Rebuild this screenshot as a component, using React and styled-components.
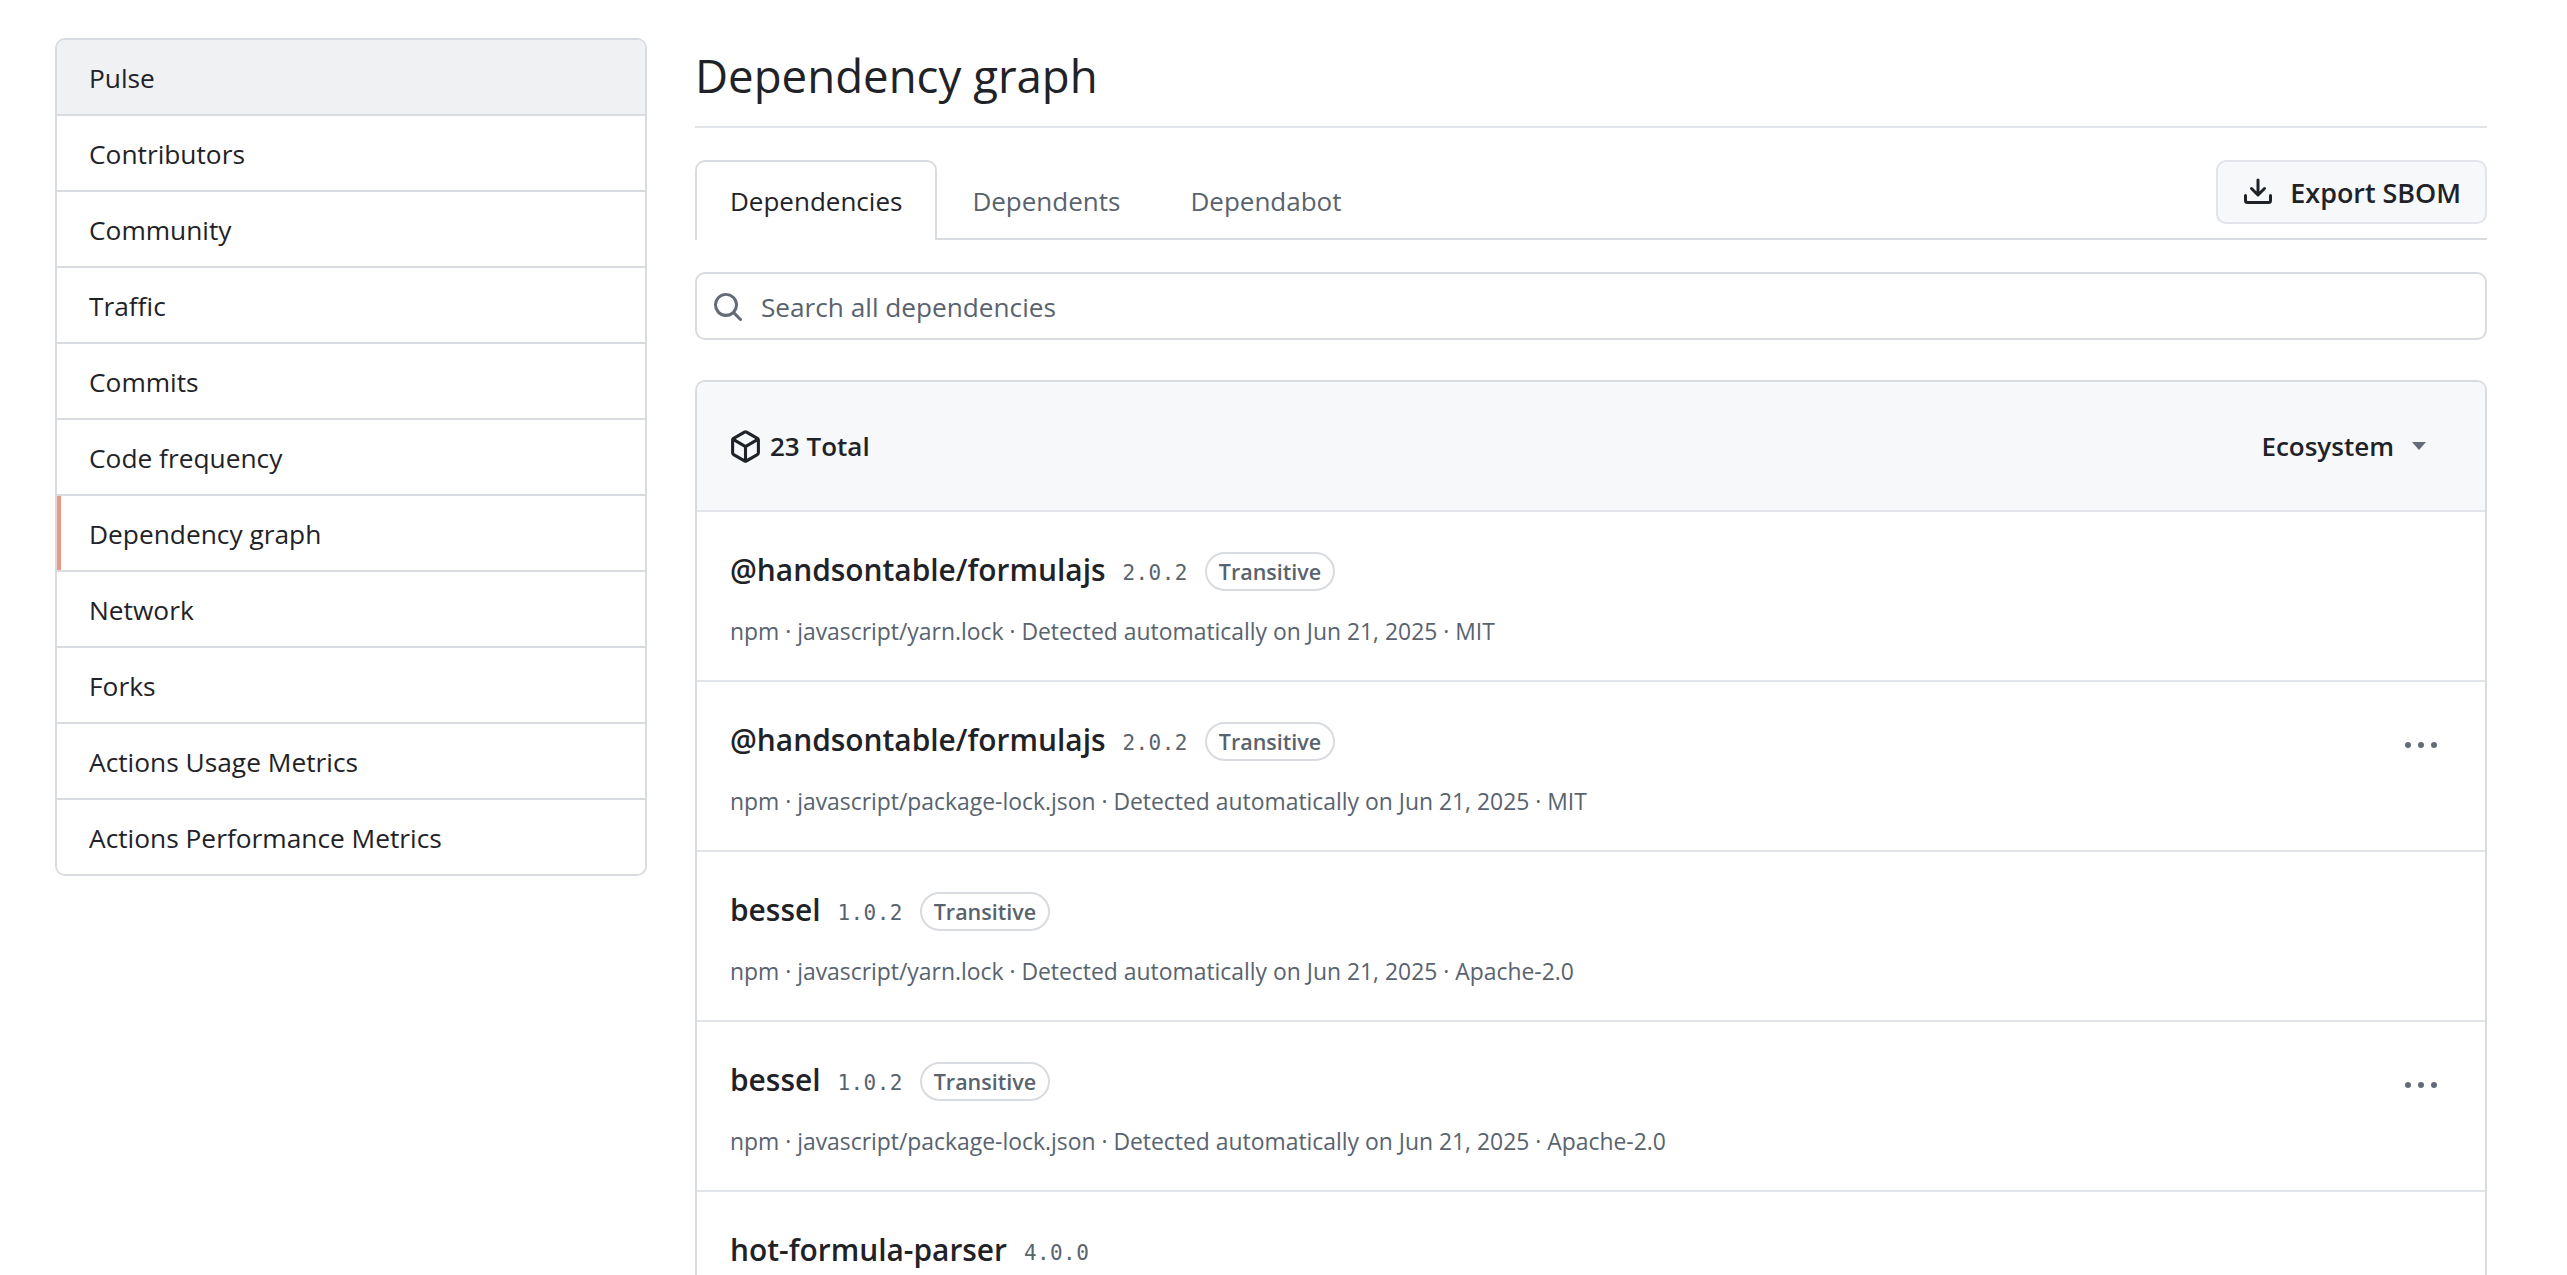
import React from 'react'
import styled, { createGlobalStyle } from 'styled-components'

const sideItems = [
  'Pulse',
  'Contributors',
  'Community',
  'Traffic',
  'Commits',
  'Code frequency',
  'Dependency graph',
  'Network',
  'Forks',
  'Actions Usage Metrics',
  'Actions Performance Metrics',
]

const deps = [
  { name: '@handsontable/formulajs', version: '2.0.2', transitive: true, meta: 'npm · javascript/yarn.lock · Detected automatically on Jun 21, 2025 · MIT' },
  { name: '@handsontable/formulajs', version: '2.0.2', transitive: true, menu: true, meta: 'npm · javascript/package-lock.json · Detected automatically on Jun 21, 2025 · MIT' },
  { name: 'bessel', version: '1.0.2', transitive: true, meta: 'npm · javascript/yarn.lock · Detected automatically on Jun 21, 2025 · Apache-2.0' },
  { name: 'bessel', version: '1.0.2', transitive: true, menu: true, meta: 'npm · javascript/package-lock.json · Detected automatically on Jun 21, 2025 · Apache-2.0' },
  { name: 'hot-formula-parser', version: '4.0.0' },
]

const Icon = ({ size, d }) => (
  <svg width={size} height={size} viewBox="0 0 16 16" fill="currentColor" style={{ flexShrink: 0 }}>
    {d.map(path => <path key={path} d={path} />)}
  </svg>
)

const downloadPaths = [
  'M2.75 14A1.75 1.75 0 0 1 1 12.25v-2.5a.75.75 0 0 1 1.5 0v2.5c0 .138.112.25.25.25h10.5a.25.25 0 0 0 .25-.25v-2.5a.75.75 0 0 1 1.5 0v2.5A1.75 1.75 0 0 1 13.25 14Z',
  'M7.25 7.689V2a.75.75 0 0 1 1.5 0v5.689l1.97-1.969a.749.749 0 1 1 1.06 1.06l-3.25 3.25a.749.749 0 0 1-1.06 0L4.22 6.78a.749.749 0 1 1 1.06-1.06l1.97 1.969Z',
]
const searchPaths = [
  'M10.68 11.74a6 6 0 0 1-7.922-8.982 6 6 0 0 1 8.982 7.922l3.04 3.04a.749.749 0 0 1-.326 1.275.749.749 0 0 1-.734-.215ZM11.5 7a4.499 4.499 0 1 0-8.997 0A4.499 4.499 0 0 0 11.5 7Z',
]
const packagePaths = [
  'm8.878.392 5.25 3.045c.54.314.872.89.872 1.514v6.098a1.75 1.75 0 0 1-.872 1.514l-5.25 3.045a1.75 1.75 0 0 1-1.756 0l-5.25-3.045A1.75 1.75 0 0 1 1 11.049V4.951c0-.624.332-1.201.872-1.514L7.122.392a1.75 1.75 0 0 1 1.756 0ZM7.875 1.69l-4.63 2.685L8 7.133l4.755-2.758-4.63-2.685a.248.248 0 0 0-.25 0ZM2.5 5.677v5.372c0 .09.047.171.125.216l4.625 2.683V8.432Zm6.25 8.271 4.625-2.683a.25.25 0 0 0 .125-.216V5.677L8.75 8.432Z',
]
const kebabPaths = [
  'M8 9a1.5 1.5 0 1 0 0-3 1.5 1.5 0 0 0 0 3ZM1.5 9a1.5 1.5 0 1 0 0-3 1.5 1.5 0 0 0 0 3Zm13 0a1.5 1.5 0 1 0 0-3 1.5 1.5 0 0 0 0 3Z',
]

const App = () => (
  <>
    <GlobalStyle />
    <Page>
      <SideNav>
        {sideItems.map(item => (
          <SideItem key={item} $selected={item === 'Pulse'} $current={item === 'Dependency graph'}>
            {item}
          </SideItem>
        ))}
      </SideNav>

      <Main>
        <Title>Dependency graph</Title>

        <TabBar>
          <Tab $active>Dependencies</Tab>
          <Tab>Dependents</Tab>
          <Tab>Dependabot</Tab>
          <ExportButton>
            <Icon size={32} d={downloadPaths} />
            Export SBOM
          </ExportButton>
        </TabBar>

        <SearchBox>
          <SearchIcon>
            <Icon size={32} d={searchPaths} />
          </SearchIcon>
          Search all dependencies
        </SearchBox>

        <Panel>
          <PanelHeader>
            <Total>
              <Icon size={33} d={packagePaths} />
              23 Total
            </Total>
            <Ecosystem>
              Ecosystem
              <Caret />
            </Ecosystem>
          </PanelHeader>

          {deps.map((dep, i) => (
            <Row key={i}>
              <div>
                <NameLine>
                  <Name>{dep.name}</Name>
                  <Version>{dep.version}</Version>
                  {dep.transitive && <Label>Transitive</Label>}
                </NameLine>
                {dep.meta && <Meta>{dep.meta}</Meta>}
              </div>
              {dep.menu && (
                <Kebab>
                  <Icon size={32} d={kebabPaths} />
                </Kebab>
              )}
            </Row>
          ))}
        </Panel>
      </Main>
    </Page>
  </>
)

export default App

const GlobalStyle = createGlobalStyle`
  html, body {
    margin: 0;
    height: 1275px;
    overflow: hidden;
    background: #ffffff;
  }

  body {
    font-family: "Open Sans", "Noto Sans", sans-serif;
    color: #1f2328;
  }

  * {
    box-sizing: border-box;
  }
`

const Page = styled.div`
  display: flex;
  align-items: flex-start;
  gap: 48px;
  padding: 38px 80px 0 55px;
`

const SideNav = styled.nav`
  flex: 0 0 592px;
  border: 2px solid #d8dbdf;
  border-radius: 10px;
  overflow: hidden;
`

const SideItem = styled.div`
  position: relative;
  display: flex;
  align-items: center;
  height: 76px;
  padding: 1px 0 0 32px;
  border-top: 2px solid #d8dbdf;
  font-size: 26.3px;
  background: ${props => (props.$selected ? '#eff1f3' : '#ffffff')};

  &:first-child {
    height: 74px;
    border-top: 0;
  }

  ${props => props.$current && `
    &::before {
      content: '';
      position: absolute;
      left: 0;
      top: 0;
      bottom: 0;
      width: 4px;
      background: #ea9a80;
    }
  `}
`

const Main = styled.main`
  flex: 1;
  min-width: 0;
`

const Title = styled.h1`
  height: 90px;
  margin: 0 0 32px;
  padding-top: 8px;
  border-bottom: 2px solid #e1e4e8;
  font-size: 45.6px;
  line-height: 58px;
  font-weight: 400;
`

const TabBar = styled.div`
  display: flex;
  align-items: flex-start;
  height: 80px;
  border-bottom: 2px solid #d8dbdf;
`

const Tab = styled.div`
  height: 80px;
  padding: 0 33px;
  border: 2px solid ${props => (props.$active ? '#d8dbdf' : 'transparent')};
  border-bottom: 0;
  border-radius: 10px 10px 0 0;
  background: ${props => (props.$active ? '#ffffff' : 'transparent')};
  color: ${props => (props.$active ? '#1f2328' : '#59636e')};
  font-size: 26px;
  line-height: 78px;
`

const ExportButton = styled.div`
  display: flex;
  align-items: center;
  gap: 16px;
  height: 64px;
  margin-left: auto;
  padding: 0 24px;
  border: 2px solid #e1e4e8;
  border-radius: 10px;
  background: #f6f8fa;
  font-size: 26.9px;
  font-weight: 600;
`

const SearchBox = styled.div`
  display: flex;
  align-items: center;
  gap: 17px;
  height: 68px;
  margin-top: 32px;
  padding: 2px 0 0 15px;
  border: 2px solid #d8dbdf;
  border-radius: 10px;
  color: #59636e;
  font-size: 26.2px;
`

const SearchIcon = styled.span`
  display: flex;
  color: #636c76;
`

const Panel = styled.section`
  margin-top: 40px;
  border: 2px solid #d8dbdf;
  border-bottom: 0;
  border-radius: 10px 10px 0 0;
`

const PanelHeader = styled.div`
  display: flex;
  align-items: center;
  justify-content: space-between;
  height: 128px;
  padding: 0 59px 0 32px;
  background: #f6f8fa;
  border-radius: 8px 8px 0 0;
`

const Total = styled.div`
  display: flex;
  align-items: center;
  gap: 8px;
  font-size: 26px;
  font-weight: 600;
`

const Ecosystem = styled.div`
  display: flex;
  align-items: center;
  gap: 18px;
  font-size: 26px;
  font-weight: 600;
`

const Caret = styled.span`
  width: 0;
  height: 0;
  border-left: 7px solid transparent;
  border-right: 7px solid transparent;
  border-top: 8px solid #636c76;
`

const Row = styled.div`
  display: flex;
  justify-content: space-between;
  height: 170px;
  padding: 40px 48px 0 33px;
  border-top: 2px solid #e1e4e8;
`

const NameLine = styled.div`
  display: flex;
  align-items: center;
  height: 39px;
`

const Name = styled.span`
  padding-bottom: 4px;
  font-size: 29.9px;
  font-weight: 600;
`

const Version = styled.span`
  margin-left: 17px;
  padding-top: 3px;
  color: #59636e;
  font-family: "DejaVu Sans Mono", monospace;
  font-size: 21px;
  letter-spacing: 0.4px;
`

const Label = styled.span`
  display: flex;
  align-items: center;
  height: 39px;
  margin-left: 17px;
  padding: 0 12px;
  border: 2px solid #d8dbdf;
  border-radius: 20px;
  color: #59636e;
  font-size: 21.5px;
  font-weight: 600;
`

const Meta = styled.div`
  margin-top: 26px;
  color: #59636e;
  font-size: 22.9px;
  line-height: 30px;
`

const Kebab = styled.div`
  display: flex;
  height: 32px;
  margin-top: 8px;
  color: #636c76;
`
